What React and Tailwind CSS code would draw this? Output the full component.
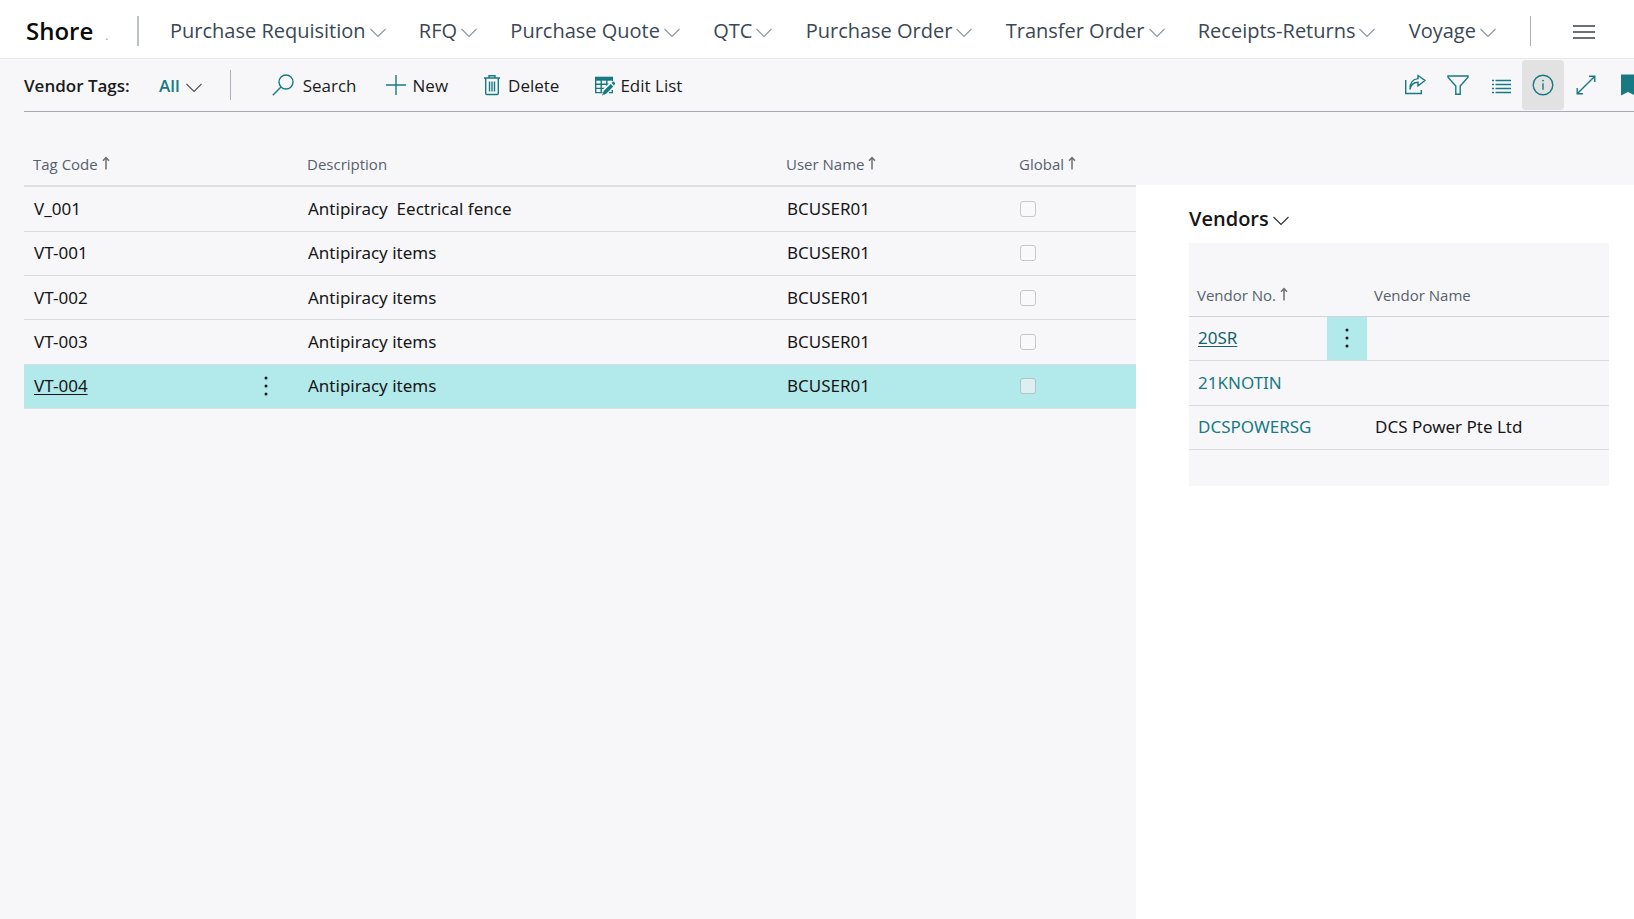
import React from "react";

const NAV_ITEMS = [
  "Purchase Requisition",
  "RFQ",
  "Purchase Quote",
  "QTC",
  "Purchase Order",
  "Transfer Order",
  "Receipts-Returns",
  "Voyage",
];

const TAGS = [
  { code: "V_001", description: "Antipiracy  Eectrical fence", user: "BCUSER01" },
  { code: "VT-001", description: "Antipiracy items", user: "BCUSER01" },
  { code: "VT-002", description: "Antipiracy items", user: "BCUSER01" },
  { code: "VT-003", description: "Antipiracy items", user: "BCUSER01" },
  { code: "VT-004", description: "Antipiracy items", user: "BCUSER01", selected: true },
];

const VENDORS = [
  { no: "20SR", name: "", selected: true },
  { no: "21KNOTIN", name: "" },
  { no: "DCSPOWERSG", name: "DCS Power Pte Ltd" },
];

function Chevron({ className }) {
  return (
    <svg viewBox="0 0 16 10" fill="none" stroke="currentColor" strokeWidth="1.1" className={"h-[10px] w-4 shrink-0 " + className} aria-hidden="true">
      <path d="M0.5 1 8 8.5 15.5 1" />
    </svg>
  );
}

function SortArrow() {
  return (
    <svg viewBox="0 0 8 14" fill="none" stroke="#6b7075" strokeWidth="1.5" className="mb-[2px] h-[14px] w-2 shrink-0" aria-label="sorted ascending">
      <path d="M4 13.5V1.5M1 4.8 4 1.5 7 4.8" />
    </svg>
  );
}

function Icon({ children, className = "size-[22px]" }) {
  return (
    <svg viewBox="0 0 22 22" fill="none" stroke="#177a83" strokeWidth="1.4" className={"shrink-0 " + className} aria-hidden="true">
      {children}
    </svg>
  );
}

function Dots() {
  return (
    <svg viewBox="0 0 4 20" fill="#1c1c1c" className="h-5 w-1" aria-hidden="true">
      <circle cx="2" cy="2" r="1.5" />
      <circle cx="2" cy="10" r="1.5" />
      <circle cx="2" cy="18" r="1.5" />
    </svg>
  );
}

function TopNav() {
  return (
    <header className="flex h-[59px] items-center border-b border-[#e9eaed] bg-white pt-1">
      <div className="flex w-[137px] shrink-0 items-baseline gap-3 pl-[26px]">
        <h1 className="text-[24px] leading-8 font-semibold text-[#0b0b0b]">Shore</h1>
        <span className="text-xs text-gray-400">.</span>
      </div>
      <div className="mr-[31px] h-[30px] w-[2px] shrink-0 bg-[#bcc1c7]" />
      <nav className="flex min-w-0 flex-1 items-center justify-between">
        {NAV_ITEMS.map((item) => (
          <button key={item} type="button" className="flex items-center gap-1 text-[20px] leading-7 whitespace-nowrap text-[#3b4754]">
            {item}
            <Chevron className="mt-1 text-[#8d959e]" />
          </button>
        ))}
      </nav>
      <div className="ml-[34px] h-[30px] w-px shrink-0 bg-[#a9afb8]" />
      <button type="button" aria-label="More" className="mr-[39px] ml-[42px] shrink-0">
        <svg viewBox="0 0 22 14" stroke="#3b4350" strokeWidth="1.6" className="mt-[2px] h-[14px] w-[22px]" aria-hidden="true">
          <path d="M0 1h22M0 7h22M0 13h22" />
        </svg>
      </button>
    </header>
  );
}

function Toolbar() {
  const action = "flex items-center text-[17px] leading-6 text-[#1b1b1b]";
  return (
    <div className="ml-6 flex h-[53px] items-center justify-between border-b border-[#a5a9b1]">
      <div className="flex items-center">
        <h2 className="mt-[2px] w-[135px] shrink-0 text-[17px] leading-6 font-semibold whitespace-nowrap text-[#1b1b1b]">Vendor Tags:</h2>
        <button type="button" className="mt-[2px] flex items-center gap-[6px] text-[17px] leading-6 font-semibold text-[#177a83]">
          All
          <Chevron className="mt-1 text-[#4d545b]" />
        </button>
        <div className="mr-[41px] ml-7 h-[30px] w-px bg-[#a9afb8]" />
        <div className="flex items-center gap-7">
          <button type="button" className={action + " gap-[9px]"}>
            <Icon>
              <circle cx="14" cy="8" r="7" />
              <path d="M9 13 0.8 21.2" />
            </Icon>
            <span className="mt-[2px]">Search</span>
          </button>
          <button type="button" className={action + " gap-[6px]"}>
            <Icon>
              <path d="M11 1v20M1 11h20" />
            </Icon>
            <span className="mt-[2px]">New</span>
          </button>
          <button type="button" className={action + " ml-2 gap-2"}>
            <svg viewBox="0 0 16 22" fill="none" stroke="#177a83" strokeWidth="1.4" className="h-[22px] w-4 shrink-0" aria-hidden="true">
              <path d="M0 4h16M5 4V1.7h6V4M1.7 4v15.3q0 1.2 1.2 1.2h10.2q1.2 0 1.2-1.2V4M5.5 7.5v10M8 7.5v10M10.5 7.5v10" />
            </svg>
            <span className="mt-[2px]">Delete</span>
          </button>
          <button type="button" className={action + " ml-2 gap-[5px]"}>
            <svg viewBox="0 0 20 20" fill="none" stroke="#177a83" strokeWidth="1.4" className="mt-[2px] h-5 w-5 shrink-0" aria-hidden="true">
              <path d="M0.7 1v15.6h8M17.3 14v2.6h-3.5" />
              <path d="M0 2.7h18" strokeWidth="4" />
              <path d="M17.3 3v3M1 8.2h15M1 12.4h10M6.2 4v12.5M11.8 4v8" />
              <path d="M6.5 20 8.4 13 16.6 4.6 20.5 7.6 12.6 17.4z" fill="#f7f7fa" stroke="none" />
              <path d="M7 19.5 8.8 14.8 15.8 7.9 18.2 10.4 11.5 17.4zM16.6 7.1 18 5.8q.5-.5 1 0L20 6.900q.5.5 0 1L19 9.600z" fill="#177a83" stroke="none" />
            </svg>
            <span className="mt-[2px]">Edit List</span>
          </button>
        </div>
      </div>
      <div className="flex h-full shrink-0 items-center overflow-hidden">
        <button type="button" aria-label="Share" className="flex h-[50px] w-[43px] items-center justify-center">
          <Icon>
            <path d="M1.7 6v13.5h15.6V16" />
            <path d="M6 15.5C7 9.8 10 8.2 14 8.2V11.8L21 6.5 14 1.5V4.6C9 5 5.8 9 6 15.5z" />
          </Icon>
        </button>
        <button type="button" aria-label="Filter" className="flex h-[50px] w-[43px] items-center justify-center">
          <Icon>
            <path d="M1 2h20v1.2L13.2 12v8.3H8.800V12L1 3.200z" />
          </Icon>
        </button>
        <button type="button" aria-label="Show as list" className="flex h-[50px] w-[43px] items-center justify-center">
          <Icon className="mt-1 size-[22px]">
            <path d="M2 4.5h2M5.5 4.5H21M2 8.5h2M5.500 8.500H21M2 12.500h2M5.500 12.500H21M2 16.500h2M5.500 16.500H21" />
          </Icon>
        </button>
        <button type="button" aria-label="Details" className="flex h-[50px] w-[42px] items-center justify-center rounded-sm bg-[#e2e2e3]">
          <Icon>
            <circle cx="11" cy="11" r="9.8" />
            <path d="M11 9.3v6.4" />
            <circle cx="11" cy="6.6" r="0.9" fill="#177a83" stroke="none" />
          </Icon>
        </button>
        <button type="button" aria-label="Expand" className="flex h-[50px] w-[43px] items-center justify-center">
          <Icon>
            <path d="M2.200 19.800 19.800 2.200M14 2.200h5.800V8M2.200 14v5.800H8" />
          </Icon>
        </button>
        <button type="button" aria-label="Bookmark" className="flex h-[50px] w-[27px] items-center justify-end">
          <svg viewBox="0 0 13 22" fill="#177a83" className="h-[22px] w-[13px]" aria-hidden="true">
            <path d="M0 0.500h13v20.500L7 18 0 21.500z" />
          </svg>
        </button>
      </div>
    </div>
  );
}

function TagTable() {
  const head = "pl-[9px] text-left align-middle font-normal";
  const cell = "pl-[10px] align-middle";
  return (
    <table className="h-[266px] w-full table-fixed border-collapse font-['Noto_Sans','Open_Sans',sans-serif] text-[17px] leading-6 text-[#161616]">
      <thead className="font-['Open_Sans','Noto_Sans',sans-serif]">
        <tr className="h-[43px] border-b-2 border-[#dde0e4] text-[15px] leading-5 text-[#56616b]">
          <th className={head + " w-[208px]"}>
            <span className="flex items-center gap-1">Tag Code <SortArrow /></span>
          </th>
          <th className="w-[66px]" aria-label="Row actions" />
          <th className={head}>Description</th>
          <th className={head + " w-[233px]"}>
            <span className="flex items-center gap-1">User Name <SortArrow /></span>
          </th>
          <th className={head + " w-[126px]"}>
            <span className="flex items-center gap-1">Global <SortArrow /></span>
          </th>
        </tr>
      </thead>
      <tbody>
        {TAGS.map((t) => (
          <tr key={t.code} className={t.selected ? "border-b border-[#dde0e4] bg-[#b2e9eb]" : "border-b border-[#d8dbdf]"}>
            <td className={cell}>
              <span className={t.selected ? "underline underline-offset-2" : ""}>{t.code}</span>
            </td>
            <td>
              {t.selected && (
                <button type="button" aria-label="Row options" className="ml-8 flex">
                  <Dots />
                </button>
              )}
            </td>
            <td className={cell + " whitespace-pre"}>{t.description}</td>
            <td className={cell}>{t.user}</td>
            <td className={cell}>
              <input
                type="checkbox"
                aria-label={"Global " + t.code}
                className={
                  t.selected
                    ? "block size-4 appearance-none rounded-[3px] border border-[#b3c3c6] bg-[#dceff1]"
                    : "block size-4 appearance-none rounded-[3px] border border-[#c6c8cc] bg-[#f9f9fb]"
                }
              />
            </td>
          </tr>
        ))}
      </tbody>
    </table>
  );
}

function VendorPanel() {
  return (
    <aside className="mt-[73px] w-[498px] shrink-0 bg-white pr-[25px] pl-[53px]">
      <button type="button" className="mt-5 flex items-center gap-1 text-[20px] leading-7 font-semibold text-[#161616]">
        Vendors
        <Chevron className="mt-1 text-[#2c2c2c]" />
      </button>
      <div className="mt-[10px] bg-[#f7f7fa] pt-9 pb-9">
        <table className="h-[171px] w-full table-fixed border-collapse font-['Noto_Sans','Open_Sans',sans-serif] text-[17px] leading-6">
          <thead className="font-['Open_Sans','Noto_Sans',sans-serif]">
            <tr className="h-[37px] border-b border-[#d0d4d9] text-[15px] leading-5 text-[#56616b]">
              <th className="w-[138px] pb-1 pl-2 text-left font-normal">
                <span className="flex items-center gap-1 whitespace-nowrap">Vendor No. <SortArrow /></span>
              </th>
              <th className="w-[40px]" aria-label="Row actions" />
              <th className="pb-1 pl-[7px] text-left font-normal">Vendor Name</th>
            </tr>
          </thead>
          <tbody>
            {VENDORS.map((v) => (
              <tr key={v.no} className="border-b border-[#d8dbdf]">
                <td className="pl-[9px] whitespace-nowrap">
                  <a href="#vendor" className={v.selected ? "text-[#17636c] underline underline-offset-2" : "text-[#177a83]"}>
                    {v.no}
                  </a>
                </td>
                <td className={v.selected ? "bg-[#b2e9eb]" : ""}>
                  {v.selected && (
                    <button type="button" aria-label="Vendor options" className="mx-auto flex">
                      <Dots />
                    </button>
                  )}
                </td>
                <td className="pl-2 text-[#161616]">{v.name}</td>
              </tr>
            ))}
          </tbody>
        </table>
      </div>
    </aside>
  );
}

export default function App() {
  return (
    <div className="flex min-h-screen flex-col bg-[#f7f7fa] font-['Open_Sans','Noto_Sans',sans-serif]">
      <TopNav />
      <Toolbar />
      <main className="flex flex-1">
        <section className="min-w-0 flex-1 pt-[31px] pl-6">
          <TagTable />
        </section>
        <VendorPanel />
      </main>
    </div>
  );
}
